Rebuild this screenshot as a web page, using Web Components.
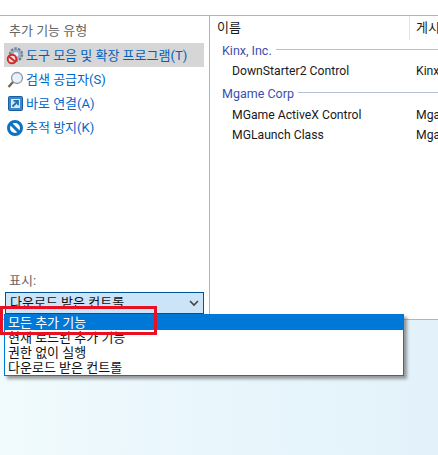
<!DOCTYPE html>
<html><head><meta charset="utf-8"><style>
html,body{margin:0;padding:0;background:#fff}
body{width:438px;height:455px;overflow:hidden;position:relative}
</style></head><body>
<addon-window></addon-window>
<script>
const F='Roboto,"Noto Sans CJK KR",sans-serif';
class AddonNav extends HTMLElement{constructor(){super();this.attachShadow({mode:'open'}).innerHTML=`<style>
:host{display:flex;align-items:center;gap:2px;height:24px;box-sizing:border-box;padding:2px 0 0 2px;color:#0066cc;font:13px/22px ${F};white-space:nowrap}
:host([sel]){background:#d6d6d6;color:#0060bd}
::slotted(svg){flex:none}
</style><slot name="i"></slot><slot></slot>`}}
customElements.define('addon-nav',AddonNav);
class AddonRow extends HTMLElement{constructor(){super();this.attachShadow({mode:'open'}).innerHTML=`<style>
:host{display:grid;grid-template-columns:184px 1fr;height:20px;align-items:start;padding-left:22px;font:12.200px/22px ${F};color:#1a1a1a;white-space:nowrap;overflow:hidden}
</style><slot></slot>`}}
customElements.define('addon-row',AddonRow);
class AddonGroup extends HTMLElement{constructor(){super();this.attachShadow({mode:'open'}).innerHTML=`<style>
:host{display:flex;align-items:flex-start;gap:4px;height:20px;padding-left:12px;font:12.500px/22px ${F};color:#3a4fb0;white-space:nowrap}
i{flex:1;height:1px;margin-top:9px;background:#b4bfd8}
</style><slot></slot><i></i>`}}
customElements.define('addon-group',AddonGroup);
class AddonMenu extends HTMLElement{constructor(){super();this.attachShadow({mode:'open'}).innerHTML=`<style>
:host{position:absolute;left:4px;top:314px;width:398px;height:61px;background:#fff;border:1px solid #0078d7;border-top:0;box-shadow:3px 3px 3px rgba(90,90,90,.6);font:13px/15px ${F};color:#111}
div{height:15px;padding-left:3px;white-space:nowrap}
.on{height:16px;line-height:18px;background:#0078d7;color:#fff;margin:0 -1px;padding-left:4px}
.hl{position:absolute;left:-5px;top:-8px;width:151px;height:23px;border:3px solid #e81123;pointer-events:none}
</style><div class="on">모든 추가 기능</div><div>현재 로드된 추가 기능</div><div>권한 없이 실행</div><div>다운로드 받은 컨트롤</div><span class="hl"></span>`}}
customElements.define('addon-menu',AddonMenu);
class AddonWindow extends HTMLElement{constructor(){super();this.attachShadow({mode:'open'}).innerHTML=`<style>
:host{display:flex;flex-direction:column;width:438px;height:455px;position:relative}
.main{margin-top:15px;height:305px;border-top:1px solid #b4b4b4;border-bottom:1px solid #b4b4b4;display:flex;box-sizing:border-box;background:#fff}
.side{width:210px;flex:none;border-right:1px solid #b4b4b4;box-sizing:border-box;display:flex;flex-direction:column;padding:0 5px 0 4px;font:13px ${F}}
.t{color:#666;height:27px;line-height:29px;padding-left:5px}
.sp{flex:1}
.lab{color:#666;height:20px;line-height:18px;padding-left:5px}
.combo{height:22px;box-sizing:border-box;border:1px solid #005499;background:#cce4f7;display:flex;align-items:center;justify-content:space-between;padding:0 4px 0 4px;margin:0 0 5px 1px;color:#111;line-height:20px}
.list{flex:1;min-width:0;overflow:hidden}
.head{display:grid;grid-template-columns:199px 1fr;height:24px;font:13px/24px ${F};color:#1a1a1a;white-space:nowrap}
.head span{padding-left:7px}
.head span+span{border-left:1px solid #e4e4e4;padding-left:6px}
.gap{height:3px}
.gap1{height:1px}
.bg{flex:1;background:linear-gradient(90deg,#f1fbfd,#e9f6fc 45%,#e3f2fa)}
</style>
<div class="main"><div class="side">
<div class="t">추가 기능 유형</div>
<addon-nav sel><svg slot="i" width="18" height="20" viewBox="0 0 18 20"><circle cx="10" cy="8.500" r="6" fill="#a5b6c8" stroke="#6d8196" stroke-width="2.400" stroke-dasharray="2.400 1.300"/><circle cx="10" cy="8.500" r="4.800" fill="#9db0c3"/><circle cx="10" cy="8.500" r="2.400" fill="#e8eef3"/><circle cx="6" cy="13" r="4.300" fill="#f6dede" stroke="#cc2b2b" stroke-width="1.900"/><path d="M3 10.500l6 5" stroke="#cc2b2b" stroke-width="1.900"/></svg>도구 모음 및 확장 프로그램(T)</addon-nav>
<addon-nav><svg slot="i" width="18" height="20" viewBox="0 0 18 20"><circle cx="11" cy="8" r="5.500" fill="#e6f1fa" stroke="#8d9aa6" stroke-width="1.300"/><path d="M7 12l-4.500 5" stroke="#77674f" stroke-width="2.400"/></svg>검색 공급자(S)</addon-nav>
<addon-nav><svg slot="i" width="18" height="20" viewBox="0 0 18 20"><rect x="2.500" y="2.500" width="14" height="14" rx="1" fill="#3a87cc" stroke="#1b5d9c"/><rect x="5" y="5" width="9" height="9" fill="#d4e8f8"/><path d="M6.500 12.500l5-5M7.500 6.800h4.500v4.500" stroke="#1f6fb8" stroke-width="1.800" fill="none"/></svg>바로 연결(A)</addon-nav>
<addon-nav><svg slot="i" width="18" height="20" viewBox="0 0 18 20"><circle cx="9" cy="10" r="6.500" fill="#fff" stroke="#0d72c0" stroke-width="3"/><path d="M4.500 5.500l9 9" stroke="#0d72c0" stroke-width="3"/></svg>추적 방지(K)</addon-nav>
<div class="sp"></div>
<div class="lab">표시:</div>
<div class="combo"><span>다운로드 받은 컨트롤</span><svg width="10" height="7" viewBox="0 0 10 7"><path d="M1 1l4 4 4-4" fill="none" stroke="#444" stroke-width="1.600"/></svg></div>
</div>
<div class="list">
<div class="head"><span>이름</span><span>게시</span></div>
<addon-group>Kinx, Inc.</addon-group>
<addon-row><span>DownStarter2 Control</span><span>Kinx</span></addon-row>
<div class="gap"></div>
<addon-group>Mgame Corp</addon-group>
<div class="gap1"></div>
<addon-row><span>MGame ActiveX Control</span><span>Mga</span></addon-row>
<addon-row><span>MGLaunch Class</span><span>Mga</span></addon-row>
</div></div>
<div class="bg"></div>
<addon-menu></addon-menu>`}}
customElements.define('addon-window',AddonWindow);
</script></body></html>
